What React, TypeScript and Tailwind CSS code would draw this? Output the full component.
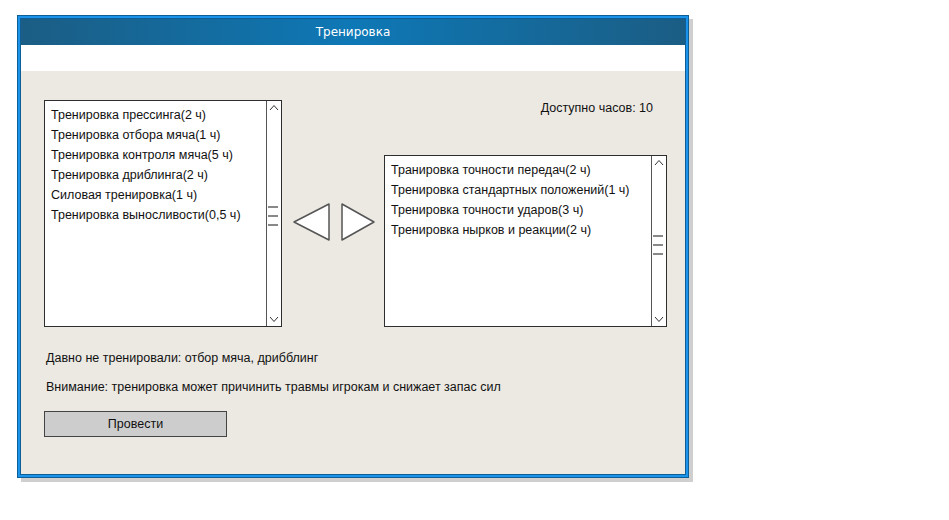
const leftItems = [
  'Тренировка прессинга(2 ч)',
  'Тренировка отбора мяча(1 ч)',
  'Тренировка контроля мяча(5 ч)',
  'Тренировка дриблинга(2 ч)',
  'Силовая тренировка(1 ч)',
  'Тренировка выносливости(0,5 ч)',
];

const rightItems = [
  'Транировка точности передач(2 ч)',
  'Тренировка стандартных положений(1 ч)',
  'Тренировка точности ударов(3 ч)',
  'Тренировка нырков и реакции(2 ч)',
];

function ListBox({ items, width, height, thumbTop }: { items: string[]; width: string; height: string; thumbTop: string }) {
  return (
    <div className={'flex bg-white border-[1.5px] border-[#2e2e2e] ' + width + ' ' + height}>
      <div className="flex-1 flex flex-col pl-[6px] pt-[4px]">
        {items.map((item) => (
          <div key={item} className="h-[20px] leading-[20px] text-[12.5px] text-[#111]">{item}</div>
        ))}
      </div>
      <div className="w-[15px] border-l-[1.5px] border-[#555] flex flex-col items-center">
        <svg width="10" height="8" viewBox="0 0 10 8" className="mt-[3px]">
          <path d="M1 6 L5 1.5 L9 6" fill="none" stroke="#333" strokeWidth="1" />
        </svg>
        <div className={'flex flex-col gap-[7px] w-full ' + thumbTop}>
          <div className="h-[2px] bg-[#888] mr-[3px] ml-[1px]" />
          <div className="h-[2px] bg-[#888] mr-[3px] ml-[1px]" />
          <div className="h-[2px] bg-[#888] mr-[3px] ml-[1px]" />
        </div>
        <div className="flex-1" />
        <svg width="10" height="8" viewBox="0 0 10 8" className="mb-[3px]">
          <path d="M1 2 L5 6.5 L9 2" fill="none" stroke="#333" strokeWidth="1" />
        </svg>
      </div>
    </div>
  );
}

function App() {
  return (
    <div className="w-[949px] h-[520px] bg-white" style={{ fontFamily: '"Liberation Sans", Arial, sans-serif' }}>
      <div className="pl-[17px] pt-[15px]">
        <div className="w-[672px] h-[463px] border border-[#0d5f95] bg-[#1c93ea] p-[2px] shadow-[4px_4px_0_#cfcfcf]">
          <div className="h-full flex flex-col border border-[#0d5f95]">
            <div className="h-[26px] flex items-center justify-center bg-[linear-gradient(to_right,#1b5d84,#0e78b6_50%,#1b5d84)]">
              <span className="text-white" style={{ fontFamily: '"DejaVu Sans", Verdana, sans-serif', fontSize: '12px' }}>Тренировка</span>
            </div>
            <div className="h-[26px] bg-white" />
            <div className="flex-1 bg-[#ece9e3] pl-[23px] pt-[29px]">
              <div className="flex">
                <ListBox items={leftItems} width="w-[238px]" height="h-[227px]" thumbTop="mt-[94px]" />
                <div className="flex gap-[10px] ml-[11px] mt-[103px] self-start">
                  <svg width="38" height="38" viewBox="0 0 38 38">
                    <path d="M36 1 L36 37 L1 19 Z" fill="white" stroke="#555" strokeWidth="1.5" strokeLinejoin="round" />
                  </svg>
                  <svg width="34" height="38" viewBox="0 0 34 38">
                    <path d="M1 1 L1 37 L33 19 Z" fill="white" stroke="#555" strokeWidth="1.5" strokeLinejoin="round" />
                  </svg>
                </div>
                <div className="flex flex-col ml-[9px]">
                  <div className="h-[55px] pr-[14px] text-right text-[12.5px] text-[#111] leading-[16px]">Доступно часов: 10</div>
                  <ListBox items={rightItems} width="w-[283px]" height="h-[172px]" thumbTop="mt-[68px]" />
                </div>
              </div>
              <div className="mt-[23px] ml-[2px] text-[12.5px] text-[#111] leading-[16px]">Давно не тренировали: отбор мяча, дрибблинг</div>
              <div className="mt-[13px] ml-[2px] text-[12.5px] text-[#111] leading-[16px]">Внимание: тренировка может причинить травмы игрокам и снижает запас сил</div>
              <button className="mt-[16px] w-[183px] h-[26px] bg-[#cdcdcd] border-[1.5px] border-[#444] text-[12.5px] text-[#111] flex items-center justify-center">Провести</button>
            </div>
          </div>
        </div>
      </div>
    </div>
  );
}

export default App;
